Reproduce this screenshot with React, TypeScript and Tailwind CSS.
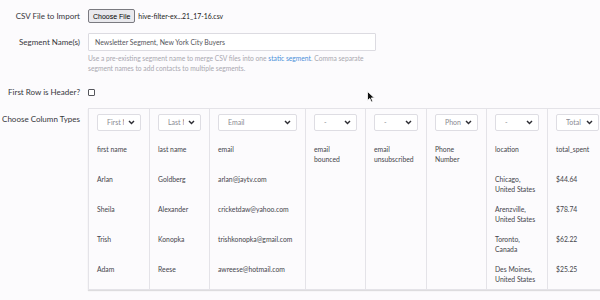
import React from 'react';

type Col = {
  type: string;
  width: string;
  header: string[];
  cells: string[][];
};

const columns: Col[] = [
  { type: 'First Name', width: 'w-[60px]', header: ['first name'], cells: [['Arlan'], ['Sheila'], ['Trish'], ['Adam']] },
  { type: 'Last Name', width: 'w-[60px]', header: ['last name'], cells: [['Goldberg'], ['Alexander'], ['Konopka'], ['Reese']] },
  {
    type: 'Email',
    width: 'w-[96px]',
    header: ['email'],
    cells: [['arlan@jaytv.com'], ['cricketdaw@yahoo.com'], ['trishkonopka@gmail.com'], ['awreese@hotmail.com']],
  },
  { type: '-', width: 'w-[60px]', header: ['email', 'bounced'], cells: [[], [], [], []] },
  { type: '-', width: 'w-[61px]', header: ['email', 'unsubscribed'], cells: [[], [], [], []] },
  { type: 'Phone Number', width: 'w-[60px]', header: ['Phone', 'Number'], cells: [[], [], [], []] },
  {
    type: '-',
    width: 'w-[61px]',
    header: ['location'],
    cells: [
      ['Chicago,', 'United States'],
      ['Arenzville,', 'United States'],
      ['Toronto,', 'Canada'],
      ['Des Moines,', 'United States'],
    ],
  },
  { type: 'Total Spent', width: 'w-[60px]', header: ['total_spent'], cells: [['$44.64'], ['$78.74'], ['$62.22'], ['$25.25']] },
];

function Chevron() {
  return (
    <svg width="7" height="5" viewBox="0 0 7 5" className="shrink-0">
      <path d="M1 1 L3.5 3.6 L6 1" fill="none" stroke="#2d2d33" strokeWidth="1.4" />
    </svg>
  );
}

function TypeSelect({ value }: { value: string }) {
  return (
    <div className="h-[17px] w-full bg-white border border-[#dedde3] rounded-[2px] flex items-center pl-[9px] pr-[5px] gap-1">
      <span className="flex-1 overflow-hidden whitespace-nowrap text-[7px] text-[#8a8a92]">{value}</span>
      <Chevron />
    </div>
  );
}

function Cell({ lines }: { lines: string[] }) {
  return (
    <div className="h-[30px] pt-[5px] px-[8px] text-[6.8px] leading-[10px] text-[#45454c]">
      {lines.map((l, i) => (
        <div key={i} className="whitespace-nowrap">
          {l}
        </div>
      ))}
    </div>
  );
}

export default function App() {
  return (
    <div className="relative w-[600px] h-[300px] overflow-hidden bg-[#fcfbfd] font-['Lato',sans-serif] text-[#36363c]">
      {/* CSV file */}
      <div className="flex items-center pt-[9px] h-[23px]">
        <div className="w-[80px] shrink-0 text-right text-[8px]">CSV File to Import</div>
        <div className="ml-[8px] flex items-center gap-[3px]">
          <button className="h-[14px] px-[4px] bg-[#e9e9ed] border border-[#7a7a80] rounded-[2px] text-[7px] leading-none text-black font-['Liberation_Sans',sans-serif]">
            Choose File
          </button>
          <span className="text-[6.9px] text-[#222]">hive-filter-ex...21_17-16.csv</span>
        </div>
      </div>

      {/* Segment names */}
      <div className="flex items-center mt-[10px]">
        <div className="w-[80px] shrink-0 text-right text-[8px]">Segment Name(s)</div>
        <div className="ml-[8px] w-[288px] h-[18px] bg-white border border-[#dcdbe1] rounded-[1px] flex items-center px-[6px] text-[6.9px] text-[#55555c]">
          Newsletter Segment, New York City Buyers
        </div>
      </div>
      <div className="ml-[88px] mt-[2px] w-[284px] text-[6.7px] leading-[10px] text-[#a9a8b0]">
        Use a pre-existing segment name to merge CSV files into one{' '}
        <span className="text-[#4a90d9]">static segment</span>. Comma separate segment names to add contacts to multiple
        segments.
      </div>

      {/* First row header */}
      <div className="flex items-center mt-[13px]">
        <div className="w-[80px] shrink-0 text-right text-[8px]">First Row is Header?</div>
        <div className="ml-[8px] w-[7px] h-[7px] border border-[#56565c] rounded-[1px] bg-white" />
      </div>

      {/* Column types */}
      <div className="flex mt-[10px]">
        <div className="w-[80px] shrink-0 text-right text-[8px] pt-[5px] whitespace-nowrap">Choose Column Types</div>
        <div className="ml-[8px] flex border border-r-0 border-[#e4e3e8] shadow-[0_1px_1px_rgba(0,0,0,0.12)] bg-[#fcfbfd]">
          {columns.map((c, i) => (
            <div key={i} className={`${c.width} shrink-0 ${i > 0 ? 'border-l border-[#e4e3e8]' : ''}`}>
              <div className="h-[30px] pt-[5px] px-[8px]">
                <TypeSelect value={c.type} />
              </div>
              <Cell lines={c.header} />
              {c.cells.map((l, j) => (
                <Cell key={j} lines={l} />
              ))}
            </div>
          ))}
        </div>
      </div>

      {/* mouse pointer */}
      <svg className="absolute left-[367px] top-[91px]" width="8" height="12" viewBox="0 0 8 12">
        <path d="M0.5 0.5 L0.5 9.5 L2.8 7.4 L4.4 11 L5.8 10.4 L4.3 6.9 L7.4 6.9 Z" fill="#111" stroke="#fff" strokeWidth="0.8" />
      </svg>
    </div>
  );
}
